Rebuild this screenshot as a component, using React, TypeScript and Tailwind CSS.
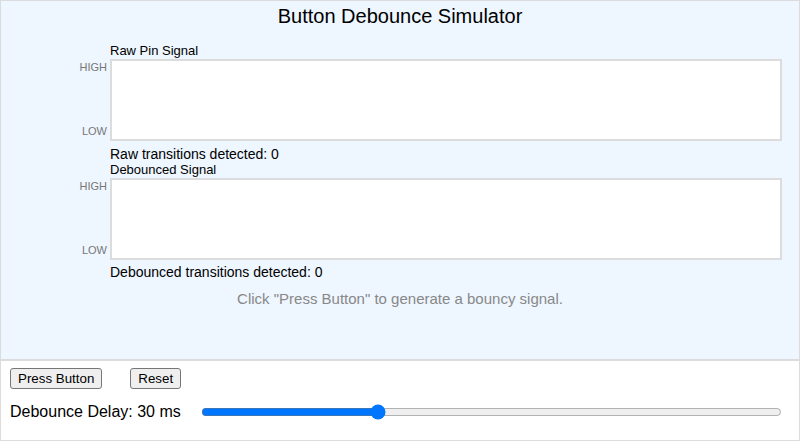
import React from "react";

function Plot({ label }: { label: string }) {
  return (
    <div className="flex flex-col">
      <div className="ml-[109px] h-4 text-[13px] leading-4 text-black">{label}</div>
      <div className="flex">
        <div className="flex h-[82px] w-[109px] flex-col justify-between pr-[3px] pt-[2px] pb-[4px] text-right text-[11px] leading-3 text-[#777]">
          <span>HIGH</span>
          <span>LOW</span>
        </div>
        <div className="h-[82px] w-[672px] border-2 border-[#dcdcdc] bg-white" />
      </div>
    </div>
  );
}

export default function App() {
  return (
    <div className="h-[442px] w-[800px] bg-white font-['Liberation_Sans',Arial,sans-serif] text-black">
      <div className="flex h-[360px] flex-col border border-[#dcdcdc] bg-[#eef6ff]">
        <h1 className="pt-[3px] text-center text-[20px] leading-6 font-normal">Button Debounce Simulator</h1>
        <div className="mt-[15px]">
          <Plot label="Raw Pin Signal" />
        </div>
        <div className="ml-[109px] mt-[5px] h-4 text-[14px] leading-4">Raw transitions detected: 0</div>
        <Plot label="Debounced Signal" />
        <div className="ml-[109px] mt-[4px] h-4 text-[14px] leading-4">Debounced transitions detected: 0</div>
        <div className="mt-[10px] text-center text-[15px] leading-[18px] text-[#888]">
          Click "Press Button" to generate a bouncy signal.
        </div>
      </div>
      <div className="flex h-[81px] flex-col border border-[#dcdcdc] px-[9px] pt-[7px]">
        <div className="flex items-center">
          <button className="h-[21px] rounded-[3px] border border-[#767676] bg-[#efefef] px-[7px] text-[13.33px] leading-4 text-black">
            Press Button
          </button>
          <button className="ml-[28px] h-[21px] rounded-[3px] border border-[#767676] bg-[#efefef] px-[7px] text-[13.33px] leading-4 text-black">
            Reset
          </button>
        </div>
        <div className="mt-[13px] flex items-center">
          <span className="text-[16px] leading-5">Debounce Delay: 30 ms</span>
          <input
            type="range"
            min={0}
            max={100}
            defaultValue={30}
            className="ml-[20px] mr-[8px] flex-1 accent-[#0075ff]"
          />
        </div>
      </div>
    </div>
  );
}
